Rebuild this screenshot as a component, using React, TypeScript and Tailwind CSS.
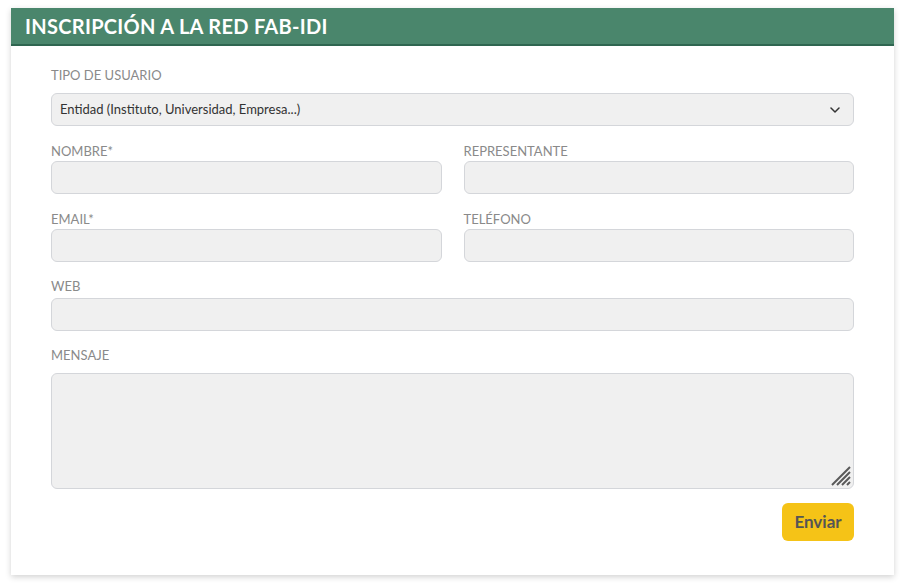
import React from "react";

const font = { fontFamily: "Lato, 'Noto Sans', sans-serif" };

function Input() {
  return <div className="h-[33px] rounded-[6px] border border-[#d4d6da] bg-[#f0f0f0]" />;
}

export default function App() {
  return (
    <div className="w-[901px] h-[583px] bg-white pt-[8px] pl-[11px]" style={font}>
      <div className="w-[883px] h-[567px] bg-white shadow-[0_2px_6px_rgba(0,0,0,0.18)]">
        <div className="h-[38px] bg-[#4a866c] border-b-2 border-[#2f6650] flex items-center pl-[14px]">
          <span className="text-white font-bold text-[20px] tracking-[0.3px]">INSCRIPCIÓN A LA RED FAB-IDI</span>
        </div>
        <div className="px-[40px] pt-[21px]">
          <div className="text-[13px] leading-[16px] text-[#8a8a8a] mb-[10px]">TIPO DE USUARIO</div>
          <div className="h-[33px] rounded-[6px] border border-[#d4d6da] bg-[#f0f0f0] flex items-center justify-between pl-[8px] pr-[13px]">
            <span className="text-[13px] text-[#333]">Entidad (Instituto, Universidad, Empresa...)</span>
            <svg width="10" height="6" viewBox="0 0 10 6" fill="none">
              <path d="M1 1l4 4 4-4" stroke="#333" strokeWidth="1.5" strokeLinecap="round" strokeLinejoin="round" />
            </svg>
          </div>
          <div className="grid grid-cols-2 gap-x-[22px] gap-y-[17px] mt-[17px]">
            <div>
              <div className="text-[13px] leading-[16px] text-[#8a8a8a] mb-[2px]">NOMBRE*</div>
              <Input />
            </div>
            <div>
              <div className="text-[13px] leading-[16px] text-[#8a8a8a] mb-[2px]">REPRESENTANTE</div>
              <Input />
            </div>
            <div>
              <div className="text-[13px] leading-[16px] text-[#8a8a8a] mb-[2px]">EMAIL*</div>
              <Input />
            </div>
            <div>
              <div className="text-[13px] leading-[16px] text-[#8a8a8a] mb-[2px]">TELÉFONO</div>
              <Input />
            </div>
          </div>
          <div className="mt-[16px]">
            <div className="text-[13px] leading-[16px] text-[#8a8a8a] mb-[4px]">WEB</div>
            <Input />
          </div>
          <div className="mt-[16px]">
            <div className="text-[13px] leading-[16px] text-[#8a8a8a] mb-[10px]">MENSAJE</div>
            <div className="relative h-[116px] rounded-[6px] border border-[#d4d6da] bg-[#f0f0f0]">
              <svg className="absolute right-[1px] bottom-[1px]" width="22" height="22" viewBox="0 0 22 22">
                <path d="M2 20L20 2M7 20L20 7M12 20L20 12M17 20L20 17" stroke="#5a5a5a" strokeWidth="2" />
              </svg>
            </div>
          </div>
          <div className="flex justify-end mt-[14px]">
            <button className="w-[72px] h-[38px] rounded-[6px] bg-[#f5c317] text-[#555] font-bold text-[17px]">Enviar</button>
          </div>
        </div>
      </div>
    </div>
  );
}
